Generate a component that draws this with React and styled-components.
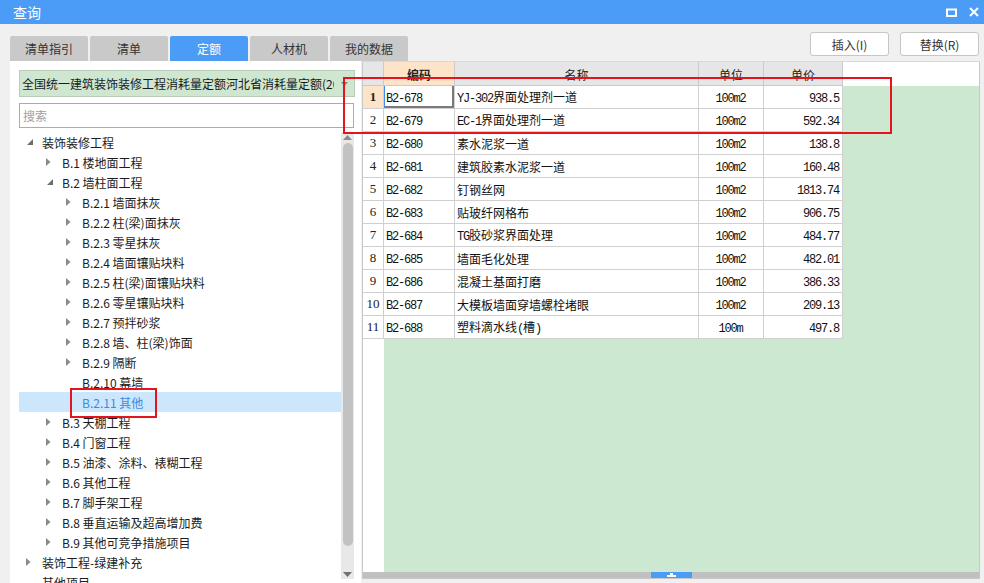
import React from "react";
import styled, { createGlobalStyle, css } from "styled-components";

const GlobalStyle = createGlobalStyle`
  html, body {
    margin: 0;
    padding: 0;
    background: #f0f0f0;
  }
  #root {
    width: 984px;
    height: 583px;
    overflow: hidden;
  }
  * {
    box-sizing: border-box;
  }
`;

const BLUE = "#4a9cf6";
const UI_FONT = `"Noto Sans CJK SC", "Noto Sans", sans-serif`;

// Window frame
const Window = styled.div`
  position: relative;
  width: 984px;
  height: 583px;
  background: #f0f0f0;
  display: flex;
  flex-direction: column;
  font-family: ${UI_FONT};
  font-size: 12px;
  color: #222;
  overflow: hidden;
`;

const TitleBar = styled.div`
  height: 24px;
  flex-shrink: 0;
  background: ${BLUE};
  display: flex;
  align-items: center;
  padding: 0 5px 0 13px;
  color: #fff;
  font-size: 14px;
`;

const TitleText = styled.div`
  flex: 1;
`;

const TitleIcons = styled.div`
  display: flex;
  align-items: center;
  gap: 12px;
`;

const Toolbar = styled.div`
  height: 37px;
  flex-shrink: 0;
  display: flex;
  justify-content: space-between;
  padding: 0 5px 0 10px;
`;

const Tabs = styled.div`
  display: flex;
  align-items: flex-end;
  gap: 2px;
`;

const Tab = styled.div`
  width: 78px;
  height: 25px;
  display: flex;
  align-items: center;
  justify-content: center;
  border-radius: 2px 2px 0 0;
  background: #c9c9c9;
  color: #333;
  font-size: 12px;
  ${(p) =>
    p.$active &&
    css`
      background: ${BLUE};
      color: #fff;
    `}
`;

const Buttons = styled.div`
  display: flex;
  gap: 11px;
  padding-top: 8px;
`;

const Button = styled.div`
  width: 79px;
  height: 24px;
  background: #fff;
  border: 1px solid #c6c6c6;
  border-radius: 3px;
  display: flex;
  align-items: center;
  justify-content: center;
  color: #333;
  font-size: 12px;
`;

const Main = styled.div`
  flex: 1;
  display: flex;
  align-items: flex-start;
  padding-left: 10px;
  gap: 1px;
`;

// Left panel
const LeftPanel = styled.div`
  width: 351px;
  height: 522px;
  background: #fff;
  display: flex;
  flex-direction: column;
  padding: 9px 6px 0 9px;
  overflow: hidden;
`;

const Select = styled.div`
  height: 27px;
  flex-shrink: 0;
  background: #cfe7d1;
  border: 1px solid #b9cbb9;
  display: flex;
  align-items: center;
  padding-left: 2px;
`;

const SelectText = styled.div`
  flex: 1;
  white-space: nowrap;
  overflow: hidden;
  font-size: 12px;
  color: #1a1a1a;
`;

const SelectArrow = styled.div`
  width: 20px;
  display: flex;
  justify-content: center;
  align-items: center;
`;

const Search = styled.div`
  margin-top: 6px;
  height: 25px;
  flex-shrink: 0;
  width: 335px;
  border: 1px solid #acacac;
  background: #fff;
  display: flex;
  align-items: center;
  padding-left: 3px;
  color: #a0a0a0;
  font-size: 12px;
`;

const TreeArea = styled.div`
  flex: 1;
  margin-top: 4px;
  display: flex;
  width: 335px;
  overflow: hidden;
`;

const TreeList = styled.div`
  flex: 1;
  overflow: hidden;
`;

const TreeRow = styled.div`
  height: 20px;
  display: flex;
  align-items: center;
  padding-left: ${(p) => (p.$level - 1) * 20 + 5}px;
  white-space: nowrap;
  color: #1c1c1c;
  ${(p) =>
    p.$selected &&
    css`
      background: #cce6fb;
      color: #3a8ae4;
    `}
`;

const Toggle = styled.div`
  width: 12px;
  height: 20px;
  display: flex;
  align-items: center;
  justify-content: center;
  margin-right: 6px;
`;

const ScrollBar = styled.div`
  width: 13px;
  margin-bottom: 4px;
  background: #e8e8e8;
  display: flex;
  flex-direction: column;
  align-items: center;
`;

const ScrollArrow = styled.div`
  height: 10px;
  display: flex;
  align-items: center;
  justify-content: center;
`;

const ScrollThumb = styled.div`
  width: 10px;
  height: 403px;
  margin-top: 1px;
  background: #c2c2c2;
  border-radius: 5px;
`;

const ScrollSpace = styled.div`
  flex: 1;
`;

// Right panel
const RightPanel = styled.div`
  width: 618px;
  height: 518px;
  border: 1px solid #c8c8c8;
  border-top-color: #d8d8d8;
  background: #fff;
  display: flex;
  flex-direction: column;
`;

const HeadRow = styled.div`
  height: 24px;
  display: flex;
  flex-shrink: 0;
`;

const HeadCell = styled.div`
  width: ${(p) => p.$w}px;
  height: 24px;
  background: ${(p) => (p.$active ? "#fde4c8" : "#e6e6e6")};
  border-right: 1px solid #cacaca;
  border-bottom: 1px solid #cacaca;
  display: flex;
  align-items: center;
  justify-content: center;
  padding-top: 2px;
  font-size: 12px;
  font-weight: ${(p) => (p.$active ? 700 : 400)};
  color: #222;
`;

const Body = styled.div`
  flex: 1;
  display: flex;
  overflow: hidden;
`;

const RowHeads = styled.div`
  width: 21px;
  background: #fff;
  display: flex;
  flex-direction: column;
`;

const RowNum = styled.div`
  height: 23px;
  border-right: 1px solid #d0d0d0;
  border-bottom: 1px solid #d0d0d0;
  background: ${(p) => (p.$active ? "#fde4c8" : "#fff")};
  display: flex;
  align-items: center;
  justify-content: center;
  font-family: "Liberation Serif", "DejaVu Serif", serif;
  font-size: 13px;
  font-weight: ${(p) => (p.$active ? 700 : 400)};
  color: #222;
`;

const DataArea = styled.div`
  flex: 1;
  background: #cde8d1;
`;

const DataRow = styled.div`
  height: 23px;
  display: flex;
  width: 459px;
  background: #fff;
`;

const Cell = styled.div`
  width: ${(p) => p.$w}px;
  height: 23px;
  border-right: 1px solid #d0d0d0;
  border-bottom: 1px solid #d0d0d0;
  display: flex;
  align-items: center;
  justify-content: ${(p) =>
    p.$align === "right" ? "flex-end" : p.$align === "center" ? "center" : "flex-start"};
  padding: 0 3px 0 2px;
  white-space: nowrap;
  overflow: hidden;
  font-size: 12px;
  color: #111;
  ${(p) =>
    p.$focus &&
    css`
      box-shadow: inset 1px 0 0 #3d8ef0, inset -2px -2px 0 #7a7a7a;
    `}
`;

const CellText = styled.span`
  white-space: nowrap;
`;

const Ascii = styled.span`
  font-family: "Liberation Mono", "DejaVu Sans Mono", monospace;
  font-size: 12px;
  letter-spacing: -1.2px;
`;

const BottomBar = styled.div`
  height: 6px;
  background: #c0c0c0;
  display: flex;
  justify-content: center;
  flex-shrink: 0;
`;

const Handle = styled.div`
  width: 41px;
  height: 6px;
  background: ${BLUE};
  display: flex;
  align-items: center;
  justify-content: center;
`;

const Highlight = styled.div`
  position: absolute;
  border: 2px solid #e3141c;
  pointer-events: none;
`;

const treeItems = [
  [1, "装饰装修工程", "open"],
  [2, "B.1 楼地面工程", "closed"],
  [2, "B.2 墙柱面工程", "open"],
  [3, "B.2.1 墙面抹灰", "closed"],
  [3, "B.2.2 柱(梁)面抹灰", "closed"],
  [3, "B.2.3 零星抹灰", "closed"],
  [3, "B.2.4 墙面镶贴块料", "closed"],
  [3, "B.2.5 柱(梁)面镶贴块料", "closed"],
  [3, "B.2.6 零星镶贴块料", "closed"],
  [3, "B.2.7 预拌砂浆", "closed"],
  [3, "B.2.8 墙、柱(梁)饰面", "closed"],
  [3, "B.2.9 隔断", "closed"],
  [3, "B.2.10 幕墙", null],
  [3, "B.2.11 其他", null, true],
  [2, "B.3 天棚工程", "closed"],
  [2, "B.4 门窗工程", "closed"],
  [2, "B.5 油漆、涂料、裱糊工程", "closed"],
  [2, "B.6 其他工程", "closed"],
  [2, "B.7 脚手架工程", "closed"],
  [2, "B.8 垂直运输及超高增加费", "closed"],
  [2, "B.9 其他可竞争措施项目", "closed"],
  [1, "装饰工程-绿建补充", "closed"],
  [1, "其他项目", null],
];

const rows = [
  ["B2-678", "YJ-302界面处理剂一道", "100m2", "938.5"],
  ["B2-679", "EC-1界面处理剂一道", "100m2", "592.34"],
  ["B2-680", "素水泥浆一道", "100m2", "138.8"],
  ["B2-681", "建筑胶素水泥浆一道", "100m2", "160.48"],
  ["B2-682", "钉钢丝网", "100m2", "1813.74"],
  ["B2-683", "贴玻纤网格布", "100m2", "906.75"],
  ["B2-684", "TG胶砂浆界面处理", "100m2", "484.77"],
  ["B2-685", "墙面毛化处理", "100m2", "482.01"],
  ["B2-686", "混凝土基面打磨", "100m2", "386.33"],
  ["B2-687", "大模板墙面穿墙螺栓堵眼", "100m2", "209.13"],
  ["B2-688", "塑料滴水线(槽)", "100m", "497.8"],
];

const cols = [
  { key: "code", title: "编码", w: 71, align: "left", active: true },
  { key: "name", title: "名称", w: 244, align: "left" },
  { key: "unit", title: "单位", w: 65, align: "center" },
  { key: "price", title: "单价", w: 79, align: "right" },
];

// ascii runs get the narrow mono font, like the grid's SimSun
function MixedText({ text }) {
  return (
    <CellText>
      {text.split(/([\x20-\x7e]+)/).map((part, i) =>
        /^[\x20-\x7e]+$/.test(part) ? <Ascii key={i}>{part}</Ascii> : part || null
      )}
    </CellText>
  );
}

function TreeToggle({ state }) {
  if (state === "open")
    return (
      <svg width="7" height="7" viewBox="0 0 7 7">
        <polygon points="6,0 6,6 0,6" fill="#6e6e6e" />
      </svg>
    );
  if (state === "closed")
    return (
      <svg width="5" height="8" viewBox="0 0 5 8" style={{ marginLeft: -3 }}>
        <polygon points="0,0 4.5,4 0,8" fill="#8a8a8a" />
      </svg>
    );
  return null;
}

function App() {
  return (
    <Window>
      <GlobalStyle />
      <TitleBar>
        <TitleText>查询</TitleText>
        <TitleIcons>
          <svg width="11" height="9" viewBox="0 0 11 9">
            <rect x="1" y="1.5" width="9" height="6.5" fill="none" stroke="#fff" strokeWidth="2" />
          </svg>
          <svg width="10" height="10" viewBox="0 0 10 10">
            <path d="M1 1 L9 9 M9 1 L1 9" stroke="#fff" strokeWidth="2" />
          </svg>
        </TitleIcons>
      </TitleBar>

      <Toolbar>
        <Tabs>
          <Tab>清单指引</Tab>
          <Tab>清单</Tab>
          <Tab $active>定额</Tab>
          <Tab>人材机</Tab>
          <Tab>我的数据</Tab>
        </Tabs>
        <Buttons>
          <Button>插入(I)</Button>
          <Button>替换(R)</Button>
        </Buttons>
      </Toolbar>

      <Main>
        <LeftPanel>
          <Select>
            <SelectText>全国统一建筑装饰装修工程消耗量定额河北省消耗量定额(2012)</SelectText>
            <SelectArrow>
              <svg width="7" height="4" viewBox="0 0 7 4">
                <polygon points="0,0 7,0 3.5,4" fill="#808080" />
              </svg>
            </SelectArrow>
          </Select>
          <Search>搜索</Search>
          <TreeArea>
            <TreeList>
              {treeItems.map(([level, label, state, selected], i) => (
                <TreeRow key={i} $level={level} $selected={selected}>
                  <Toggle>
                    <TreeToggle state={state} />
                  </Toggle>
                  {label}
                </TreeRow>
              ))}
            </TreeList>
            <ScrollBar>
              <ScrollArrow>
                <svg width="9" height="5" viewBox="0 0 9 5">
                  <polygon points="0,5 9,5 4.5,0" fill="#8a8a8a" />
                </svg>
              </ScrollArrow>
              <ScrollThumb />
              <ScrollSpace />
              <ScrollArrow>
                <svg width="9" height="5" viewBox="0 0 9 5">
                  <polygon points="0,0 9,0 4.5,5" fill="#707070" />
                </svg>
              </ScrollArrow>
            </ScrollBar>
          </TreeArea>
        </LeftPanel>

        <RightPanel>
          <HeadRow>
            <HeadCell $w={21} />
            {cols.map((c) => (
              <HeadCell key={c.key} $w={c.w} $active={c.active}>
                {c.title}
              </HeadCell>
            ))}
          </HeadRow>
          <Body>
            <RowHeads>
              {rows.map((r, i) => (
                <RowNum key={i} $active={i === 0}>
                  {i + 1}
                </RowNum>
              ))}
            </RowHeads>
            <DataArea>
              {rows.map((r, i) => (
                <DataRow key={i}>
                  {cols.map((c, j) => (
                    <Cell key={c.key} $w={c.w} $align={c.align} $focus={i === 0 && j === 0}>
                      <MixedText text={r[j]} />
                    </Cell>
                  ))}
                </DataRow>
              ))}
            </DataArea>
          </Body>
          <BottomBar>
            <Handle>
              <svg width="9" height="4" viewBox="0 0 9 4">
                <polygon points="3,0 6,0 6,2 9,2 9,4 0,4 0,2 3,2" fill="#fff" />
              </svg>
            </Handle>
          </BottomBar>
        </RightPanel>
      </Main>

      <Highlight style={{ left: 70, top: 388, width: 87, height: 30 }} />
      <Highlight style={{ left: 343, top: 77, width: 549, height: 57 }} />
    </Window>
  );
}

export default App;
